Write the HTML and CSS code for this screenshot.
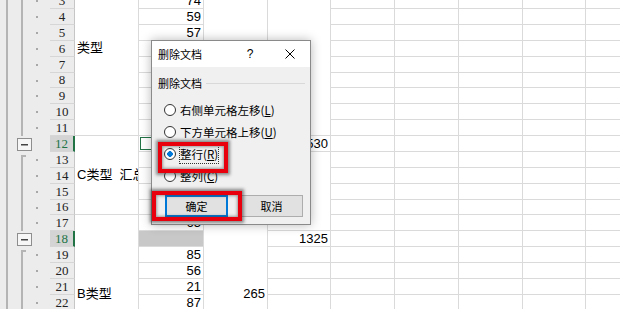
FILE: index.html
```html
<!DOCTYPE html>
<html lang="zh-CN">
<head>
<meta charset="utf-8">
<title>删除文档</title>
<link rel="stylesheet" href="styles.css">
</head>
<body>
<div class="sheet">
  <!-- row 1 -->
  <i class="ol st"></i><b class="hd"></b><i class="c m s11">类型</i><i class="c"></i><i class="c s11"></i><i class="c s11"></i><i class="c"></i><i class="c"></i><i class="c"></i><i class="c"></i><i class="c"></i>
  <i class="ol"></i><b class="hd"></b><i class="c"></i><i class="c"></i><i class="c"></i><i class="c"></i><i class="c"></i><i class="c"></i>
  <i class="ol"></i><b class="hd">3</b><i class="c">74</i><i class="c"></i><i class="c"></i><i class="c"></i><i class="c"></i><i class="c"></i>
  <i class="ol"></i><b class="hd">4</b><i class="c">59</i><i class="c"></i><i class="c"></i><i class="c"></i><i class="c"></i><i class="c"></i>
  <i class="ol"></i><b class="hd">5</b><i class="c">57</i><i class="c"></i><i class="c"></i><i class="c"></i><i class="c"></i><i class="c"></i>
  <i class="ol"></i><b class="hd">6</b><i class="c"></i><i class="c"></i><i class="c"></i><i class="c"></i><i class="c"></i><i class="c"></i>
  <i class="ol"></i><b class="hd">7</b><i class="c"></i><i class="c"></i><i class="c"></i><i class="c"></i><i class="c"></i><i class="c"></i>
  <i class="ol"></i><b class="hd">8</b><i class="c"></i><i class="c"></i><i class="c"></i><i class="c"></i><i class="c"></i><i class="c"></i>
  <i class="ol"></i><b class="hd">9</b><i class="c"></i><i class="c"></i><i class="c"></i><i class="c"></i><i class="c"></i><i class="c"></i>
  <i class="ol"></i><b class="hd">10</b><i class="c"></i><i class="c"></i><i class="c"></i><i class="c"></i><i class="c"></i><i class="c"></i>
  <i class="ol"></i><b class="hd">11</b><i class="c"></i><i class="c"></i><i class="c"></i><i class="c"></i><i class="c"></i><i class="c"></i>
  <!-- row 12 -->
  <i class="ol bt"><span class="minus"></span></i><b class="hd sel">12</b><i class="c m s5">C类型&nbsp;&nbsp;汇总</i><i class="c act"></i><i class="c s5"></i><i class="c">1530</i><i class="c"></i><i class="c"></i><i class="c"></i><i class="c"></i><i class="c"></i>
  <i class="ol st"></i><b class="hd">13</b><i class="c"></i><i class="c s5"></i><i class="c"></i><i class="c"></i><i class="c"></i><i class="c"></i><i class="c"></i>
  <i class="ol"></i><b class="hd">14</b><i class="c"></i><i class="c"></i><i class="c"></i><i class="c"></i><i class="c"></i><i class="c"></i>
  <i class="ol"></i><b class="hd">15</b><i class="c"></i><i class="c"></i><i class="c"></i><i class="c"></i><i class="c"></i><i class="c"></i>
  <i class="ol"></i><b class="hd">16</b><i class="c"></i><i class="c"></i><i class="c"></i><i class="c"></i><i class="c"></i><i class="c"></i>
  <!-- row 17 -->
  <i class="ol"></i><b class="hd">17</b><i class="c m s10">B类型</i><i class="c">65</i><i class="c s10">265</i><i class="c"></i><i class="c"></i><i class="c"></i><i class="c"></i><i class="c"></i>
  <!-- row 18 -->
  <i class="ol bt"><span class="minus"></span></i><b class="hd sel">18</b><i class="c selg"></i><i class="c">1325</i><i class="c"></i><i class="c"></i><i class="c"></i><i class="c"></i><i class="c"></i>
  <i class="ol st"></i><b class="hd">19</b><i class="c">85</i><i class="c"></i><i class="c"></i><i class="c"></i><i class="c"></i><i class="c"></i><i class="c"></i>
  <i class="ol"></i><b class="hd">20</b><i class="c">56</i><i class="c"></i><i class="c"></i><i class="c"></i><i class="c"></i><i class="c"></i><i class="c"></i>
  <i class="ol"></i><b class="hd">21</b><i class="c">21</i><i class="c"></i><i class="c"></i><i class="c"></i><i class="c"></i><i class="c"></i><i class="c"></i>
  <i class="ol"></i><b class="hd">22</b><i class="c">87</i><i class="c"></i><i class="c"></i><i class="c"></i><i class="c"></i><i class="c"></i><i class="c"></i>
  <i class="ol"></i><b class="hd"></b><i class="c"></i><i class="c"></i><i class="c"></i><i class="c"></i><i class="c"></i><i class="c"></i><i class="c"></i>
  <i class="ol"></i><b class="hd"></b><i class="c"></i><i class="c"></i><i class="c"></i><i class="c"></i><i class="c"></i><i class="c"></i><i class="c"></i>
  <i class="ol"></i><b class="hd"></b><i class="c"></i><i class="c"></i><i class="c"></i><i class="c"></i><i class="c"></i><i class="c"></i><i class="c"></i>
  <i class="ol"></i><b class="hd"></b><i class="c"></i><i class="c"></i><i class="c"></i><i class="c"></i><i class="c"></i><i class="c"></i><i class="c"></i>
</div>

<div class="dialog">
  <div class="dlg-title">
    <span class="dlg-name">删除文档</span>
    <span class="dlg-btn">?</span>
    <span class="dlg-btn"><svg width="10" height="10" viewBox="0 0 10 10"><path d="M0.5 0.5 L9.5 9.5 M9.5 0.5 L0.5 9.5" stroke="#000" stroke-width="1" fill="none"/></svg></span>
  </div>
  <div class="dlg-body">
    <div class="group-label"><span>删除文档</span><i class="rule"></i></div>
    <div class="opt"><span class="radio"></span><span class="opt-text">右侧单元格左移(<u>L</u>)</span></div>
    <div class="opt"><span class="radio"></span><span class="opt-text">下方单元格上移(<u>U</u>)</span></div>
    <div class="opt"><span class="radio on"></span><span class="opt-text focus">整行(<u>R</u>)</span></div>
    <div class="opt"><span class="radio"></span><span class="opt-text">整列(<u>C</u>)</span></div>
    <div class="btns"><span class="btn primary">确定</span><span class="btn">取消</span></div>
  </div>
</div>

<div class="mark mark-row"></div>
<div class="mark mark-ok"></div>
</body>
</html>
```

FILE: styles.css
```css
* { box-sizing: border-box; }
html, body { margin: 0; padding: 0; }
body {
  width: 620px;
  height: 309px;
  overflow: hidden;
  position: relative;
  background: #fff;
  font-family: "Liberation Sans", "Noto Sans CJK SC", sans-serif;
}

/* ---------- sheet ---------- */
.sheet {
  display: grid;
  grid-template-columns: 50px 25px 64px 65px 64px 63px 64px 64px 64px 63px 64px;
  grid-template-rows: repeat(26, 15.875px);
  margin-top: -38.625px;
  width: 650px;
}
.sheet i, .sheet b { font-style: normal; font-weight: normal; }

.ol {
  background-color: #ececec;
  background-image:
    linear-gradient(#b4b4b4, #b4b4b4),
    linear-gradient(#b4b4b4, #b4b4b4),
    linear-gradient(#a8a8a8, #a8a8a8);
  background-repeat: no-repeat;
  background-size: 2px 100%, 2px 100%, 2px 2px;
  background-position: 6px 0, 21px 0, 36px 7px;
}
.ol.st {
  background-image:
    linear-gradient(#b4b4b4, #b4b4b4),
    linear-gradient(#b4b4b4, #b4b4b4),
    linear-gradient(#a8a8a8, #a8a8a8),
    linear-gradient(#b4b4b4, #b4b4b4);
  background-size: 2px 100%, 2px 13px, 2px 2px, 5px 2px;
  background-position: 6px 0, 21px 3px, 36px 7px, 21px 3px;
}
.ol.bt {
  background-image: linear-gradient(#b4b4b4, #b4b4b4);
  background-size: 2px 100%;
  background-position: 6px 0;
}
.minus {
  display: block;
  width: 15px;
  height: 13px;
  margin: 2px 0 0 17px;
  border: 1px solid #8e8e8e;
  background: #f6f6f6 linear-gradient(#444, #444) center / 7px 1.5px no-repeat;
}

.hd {
  background: #ececec;
  border-right: 1px solid #c6c6c6;
  border-bottom: 1px solid #d6d6d6;
  font-family: "Liberation Serif", serif;
  font-size: 13px;
  line-height: 14px;
  color: #222;
  display: flex;
  align-items: flex-end;
  justify-content: center;
  padding-left: 0;
}
.hd.sel {
  background: #d4d4d4;
  color: #217346;
  border-right: 2px solid #217346;
}

.c {
  background: #fff;
  border-right: 1px solid #dadada;
  border-bottom: 1px solid #dadada;
  font-size: 13px;
  line-height: 14px;
  color: #000;
  display: flex;
  align-items: flex-end;
  justify-content: flex-end;
  padding-right: 2px;
  white-space: nowrap;
  overflow: hidden;
}
.c.m {
  justify-content: flex-start;
  align-items: center;
  padding: 0 0 0 2px;
}
.c.s10 { align-items: center; }
.s11 { grid-row: span 11; }
.s10 { grid-row: span 10; }
.s5 { grid-row: span 5; }
.c.act { box-shadow: inset 0 0 0 1px #fff, inset 0 0 0 2px #217346; }
.c.selg { background: #c8c8c8; }

/* ---------- dialog ---------- */
.dialog {
  position: absolute;
  left: 151px;
  top: 40px;
  width: 160px;
  height: 185px;
  border: 1px solid #8a8a8a;
  background: #f0f0f0;
  box-shadow: 0 0 10px rgba(0, 0, 0, 0.28);
  font-family: "Noto Sans CJK SC", "Noto Sans", sans-serif;
  color: #000;
  display: flex;
  flex-direction: column;
}
.dlg-title {
  height: 26px;
  background: #fff;
  display: flex;
  align-items: center;
  padding-left: 6px;
  font-size: 11px;
}
.dlg-name { flex: 1; }
.dlg-btn {
  width: 40px;
  height: 26px;
  display: flex;
  align-items: center;
  justify-content: center;
  font-family: "Liberation Sans", sans-serif;
  font-size: 12px;
}
.dlg-body {
  flex: 1;
  padding: 8px 5px 7px 6px;
  display: flex;
  flex-direction: column;
}
.group-label {
  height: 16px;
  display: flex;
  align-items: center;
  font-size: 11px;
  line-height: 16px;
}
.rule {
  flex: 1;
  height: 1px;
  background: #d9d9d9;
  margin-left: 4px;
}
.group-label + .opt { margin-top: 8px; }
.opt {
  height: 22px;
  display: flex;
  align-items: center;
  padding-left: 6px;
  font-size: 11.5px;
}
.radio {
  width: 12px;
  height: 12px;
  border: 1px solid #333;
  border-radius: 50%;
  background: #fff;
  margin-right: 4px;
  flex: none;
}
.radio.on {
  background: #fff radial-gradient(circle, #0078d7 0 2.6px, transparent 3px);
}
.opt-text { line-height: 17px; white-space: nowrap; }
.opt-text u { text-decoration-thickness: 1px; text-underline-offset: 1px; }
.opt-text.focus {
  border: 1px dotted #333;
  margin-left: -1px;
  padding: 0;
}
.btns {
  margin-top: 8px;
  display: flex;
  justify-content: flex-end;
  gap: 12px;
  padding-right: 2px;
}
.btn {
  width: 63px;
  height: 22px;
  border: 1px solid #adadad;
  background: #e1e1e1;
  display: flex;
  align-items: center;
  justify-content: center;
  font-size: 11px;
}
.btn.primary { border: 2px solid #0078d7; }

/* ---------- red annotation boxes ---------- */
.mark {
  position: absolute;
  border: 4px solid #e8000d;
  box-shadow: 0 0 3px 2px rgba(50, 50, 50, 0.55), inset 0 0 3px 1px rgba(50, 50, 50, 0.45);
}
.mark-row { left: 158px; top: 142px; width: 70px; height: 31px; }
.mark-ok { left: 152px; top: 191px; width: 90px; height: 30px; }
```
